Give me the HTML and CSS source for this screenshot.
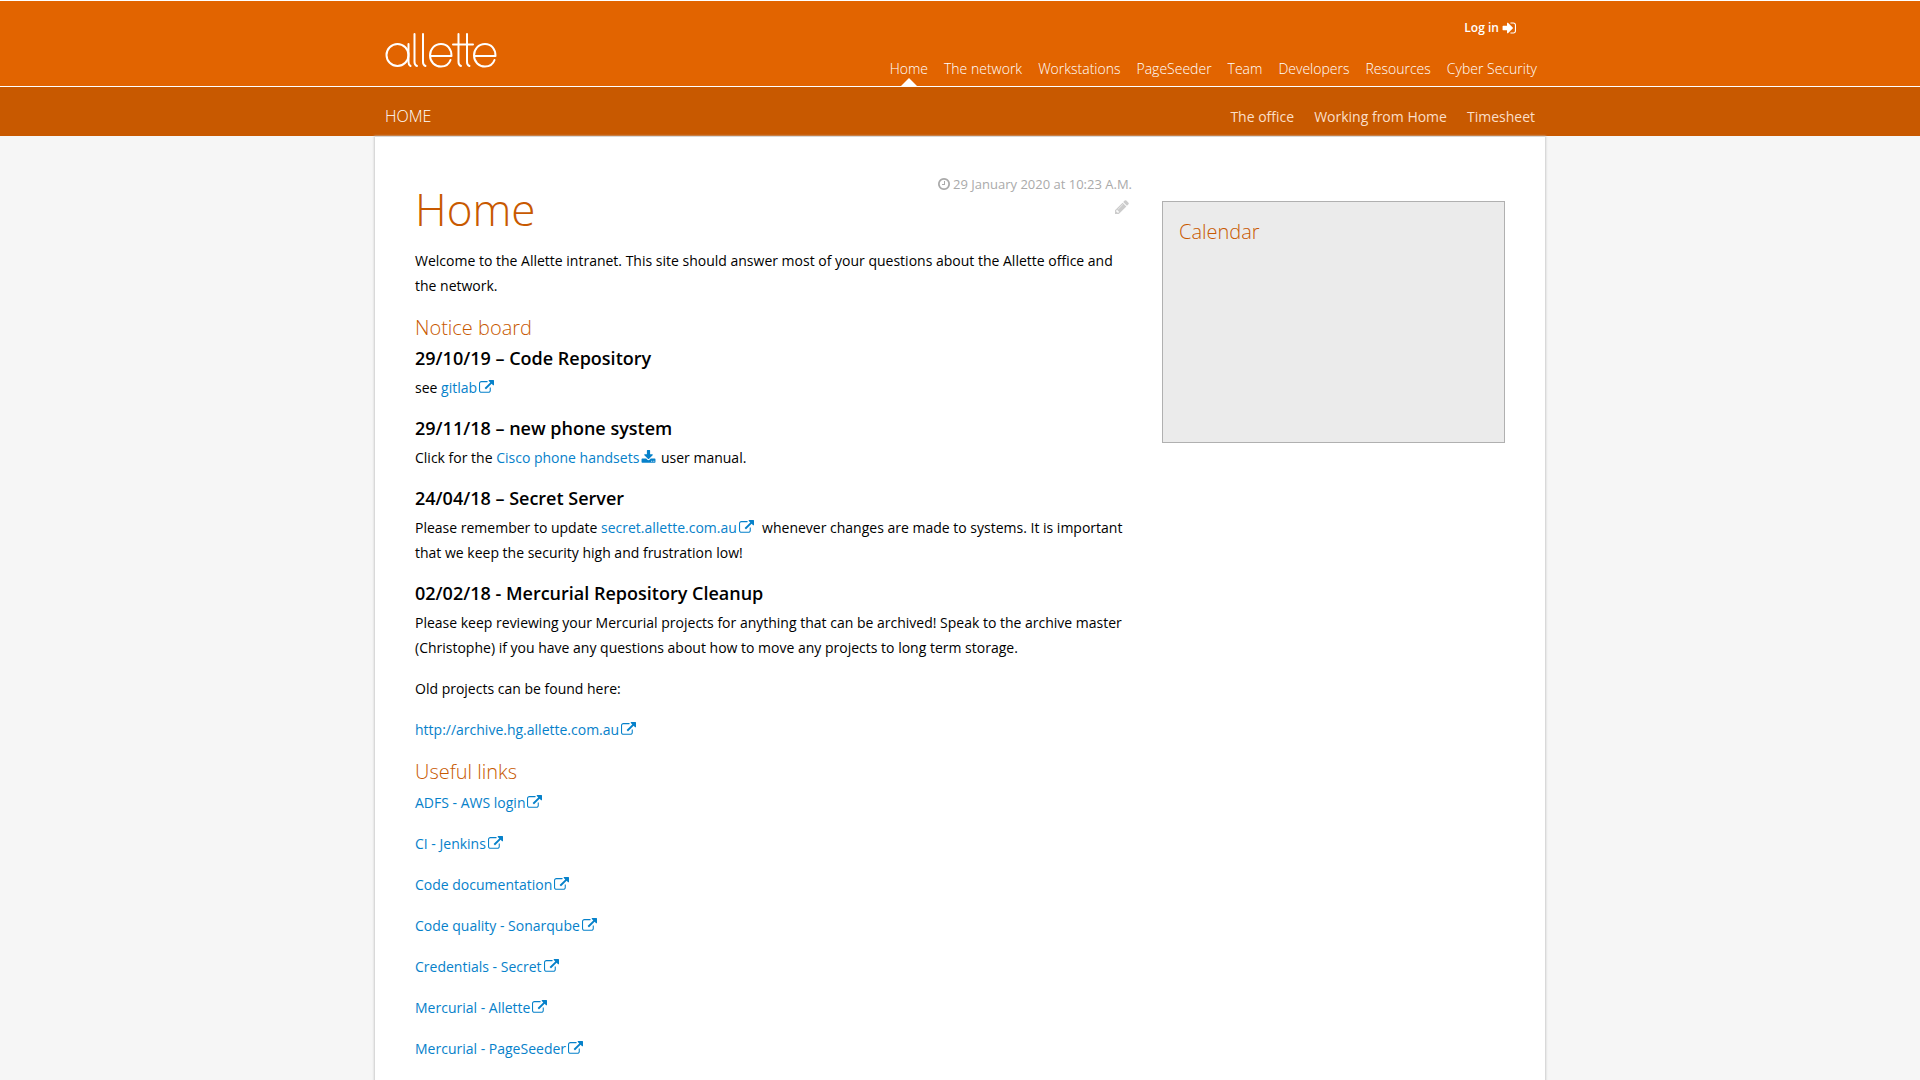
FILE: index.html
```html
<!DOCTYPE html>
<html lang="en">
<head>
<meta charset="utf-8">
<title>Home</title>
<link rel="stylesheet" href="styles.css">
</head>
<body>
<svg class="sprite" aria-hidden="true">
  <symbol id="i-ext" viewBox="0 0 1792 1792"><path d="M1408 928v320q0 119-84.5 203.5t-203.5 84.5h-832q-119 0-203.5-84.5t-84.5-203.5v-832q0-119 84.5-203.5t203.5-84.5h704q14 0 23 9t9 23v64q0 14-9 23t-23 9h-704q-66 0-113 47t-47 113v832q0 66 47 113t113 47h832q66 0 113-47t47-113v-320q0-14 9-23t23-9h64q14 0 23 9t9 23zm384-864v512q0 26-19 45t-45 19-45-19l-176-176-652 652q-10 10-23 10t-23-10l-114-114q-10-10-10-23t10-23l652-652-176-176q-19-19-19-45t19-45 45-19h512q26 0 45 19t19 45z"/></symbol>
  <symbol id="i-down" viewBox="0 0 1792 1792"><path d="M1344 1344q0-26-19-45t-45-19-45 19-19 45 19 45 45 19 45-19 19-45zm256 0q0-26-19-45t-45-19-45 19-19 45 19 45 45 19 45-19 19-45zm128-224v320q0 40-28 68t-68 28h-1472q-40 0-68-28t-28-68v-320q0-40 28-68t68-28h465l135 136q58 56 136 56t136-56l136-136h464q40 0 68 28t28 68zm-325-569q17 41-14 70l-448 448q-18 19-45 19t-45-19l-448-448q-31-29-14-70 17-39 59-39h256v-448q0-26 19-45t45-19h256q26 0 45 19t19 45v448h256q42 0 59 39z"/></symbol>
  <symbol id="i-clock" viewBox="128 0 1536 1792"><path d="M1024 544v448q0 14-9 23t-23 9h-320q-14 0-23-9t-9-23v-64q0-14 9-23t23-9h224v-352q0-14 9-23t23-9h64q14 0 23 9t9 23zm416 352q0-148-73-273t-198-198-273-73-273 73-198 198-73 273 73 273 198 198 273 73 273-73 198-198 73-273zm224 0q0 209-103 385.500t-279.500 279.500-385.500 103-385.500-103-279.500-279.500-103-385.500 103-385.500 279.500-279.500 385.500-103 385.500 103 279.500 279.500 103 385.500z"/></symbol>
  <symbol id="i-pencil" viewBox="128 128 1536 1536"><path d="M491 1536l91-91-235-235-91 91v107h128v128h107zm523-928q0-22-22-22-10 0-17 7l-542 542q-7 7-7 17 0 22 22 22 10 0 17-7l542-542q7-7 7-17zm-54-192l416 416-832 832h-416v-416zm683 96q0 53-37 90l-166 166-416-416 166-165q36-38 90-38 53 0 91 38l235 234q37 39 37 91z"/></symbol>
  <symbol id="i-signin" viewBox="64 96 1600 1600"><path d="M1312 896q0 26-19 45l-544 544q-19 19-45 19t-45-19-19-45v-288h-448q-26 0-45-19t-19-45v-384q0-26 19-45t45-19h448v-288q0-26 19-45t45-19 45 19l544 544q19 19 19 45zm352-352v704q0 119-84.500 203.500t-203.500 84.500h-320q-13 0-22.500-9.500t-9.500-22.500q0-4-1-20t-.5-26.500 3-23.500 10-19.500 20.500-6.500h320q66 0 113-47t47-113v-704q0-66-47-113t-113-47h-312l-11.500-1-11.500-3-8-5.500-7-9-2-13.500q0-4-1-20t-.5-26.500 3-23.500 10-19.500 20.500-6.500h320q119 0 203.500 84.500t84.500 203.500z"/></symbol>
</svg>

<header class="header">
  <div class="wrap header-row">
    <a class="logo" href="#" aria-label="allette">
      <svg viewBox="0 0 112 36" width="112" height="36">
        <g fill="none" stroke="#fff" stroke-width="2" stroke-linecap="round" stroke-linejoin="round">
          <circle cx="12.500" cy="23" r="11"/>
          <path d="M23.500 12v18q0 3 2 4M29.500 2v28q0 3 2.500 4M38 2v28q0 3 2.500 4"/>
          <path d="M45.500 24h21c0-7-4-12-10.500-12s-11 5-11 11.500 5 11 11 11c4.500 0 8-2 9.500-6.500"/>
          <path d="M73.500 2v28q0 3 2.500 4M82 2v28q0 3 2.500 4M68 12.500h20"/>
          <path d="M89.500 24h21c0-7-4-12-10.500-12s-11 5-11 11.500 5 11 11 11c4.500 0 8-2 9.500-6.500"/>
        </g>
      </svg>
    </a>
    <div class="header-right">
      <a class="login" href="#">Log in <svg class="icon icon-lead"><use href="#i-signin"/></svg></a>
      <nav class="main-nav">
        <a class="active" href="#">Home</a>
        <a href="#">The network</a>
        <a href="#">Workstations</a>
        <a href="#">PageSeeder</a>
        <a href="#">Team</a>
        <a href="#">Developers</a>
        <a href="#">Resources</a>
        <a href="#">Cyber Security</a>
      </nav>
    </div>
  </div>
</header>

<div class="subbar">
  <div class="wrap subbar-row">
    <a class="section" href="#">HOME</a>
    <nav class="sub-nav">
      <a href="#">The office</a>
      <a href="#">Working from Home</a>
      <a href="#">Timesheet</a>
    </nav>
  </div>
</div>

<div class="page">
  <main class="content">
    <div class="title-row">
      <h1>Home</h1>
      <div class="meta">
        <time datetime="2020-01-29T10:23"><svg class="icon icon-clock"><use href="#i-clock"/></svg> 29 January 2020 at 10:23 A.M.</time>
        <a class="edit" href="#" aria-label="Edit"><svg class="icon icon-lead"><use href="#i-pencil"/></svg></a>
      </div>
    </div>
    <p>Welcome to the Allette intranet. This site should answer most of your questions about the Allette office and the network.</p>
    <h2>Notice board</h2>
    <h3>29/10/19 – Code Repository</h3>
    <p>see <a href="#">gitlab<svg class="icon"><use href="#i-ext"/></svg></a></p>
    <h3>29/11/18 – new phone system</h3>
    <p>Click for the <a href="#">Cisco phone handsets<svg class="icon"><use href="#i-down"/></svg></a> user manual.</p>
    <h3>24/04/18 – Secret Server</h3>
    <p>Please remember to update <a href="#">secret.allette.com.au<svg class="icon"><use href="#i-ext"/></svg></a>&nbsp; whenever changes are made to systems. It is important that we keep the security high and frustration low!</p>
    <h3>02/02/18 - Mercurial Repository Cleanup</h3>
    <p>Please keep reviewing your Mercurial projects for anything that can be archived! Speak to the archive master (Christophe) if you have any questions about how to move any projects to long term storage.</p>
    <p>Old projects can be found here:</p>
    <p><a href="#">http://archive.hg.allette.com.au<svg class="icon"><use href="#i-ext"/></svg></a></p>
    <h2>Useful links</h2>
    <p><a href="#">ADFS - AWS login<svg class="icon"><use href="#i-ext"/></svg></a></p>
    <p><a href="#">CI - Jenkins<svg class="icon"><use href="#i-ext"/></svg></a></p>
    <p><a href="#">Code documentation<svg class="icon"><use href="#i-ext"/></svg></a></p>
    <p><a href="#">Code quality - Sonarqube<svg class="icon"><use href="#i-ext"/></svg></a></p>
    <p><a href="#">Credentials - Secret<svg class="icon"><use href="#i-ext"/></svg></a></p>
    <p><a href="#">Mercurial - Allette<svg class="icon"><use href="#i-ext"/></svg></a></p>
    <p><a href="#">Mercurial - PageSeeder<svg class="icon"><use href="#i-ext"/></svg></a></p>
  </main>
  <aside class="sidebar">
    <section class="calendar"><h2>Calendar</h2></section>
  </aside>
</div>
</body>
</html>
```

FILE: styles.css
```css
* { box-sizing: border-box; }
body {
  margin: 0;
  background: #f6f6f6;
  color: #000;
  font: 400 14px/25px "Open Sans", sans-serif;
}
a { color: #0681ca; text-decoration: none; }
.sprite { display: none; }
.icon { width: 15px; height: 15px; fill: currentColor; vertical-align: -2px; margin: 0 1px 0 2px; }
.icon-lead { width: 14px; height: 14px; margin: 0; vertical-align: -3px; }
.icon-clock { width: 12px; height: 14px; margin: 0; }
.wrap { max-width: 1170px; margin: 0 auto; padding: 0 10px; }

.header { background: #e26400; border-top: 1px solid #fff; border-bottom: 1px solid #fff; }
.header-row { display: flex; justify-content: space-between; }
.header a { color: #fff; }
.logo { padding-top: 31px; }
.logo svg { display: block; }
.header-right { display: flex; flex-direction: column; align-items: flex-end; padding-top: 14px; }
.login { font-size: 12px; font-weight: 600; margin-right: 19px; }
.main-nav { display: flex; gap: 16px; margin: 16px -2px 0 0; font-weight: 300; }
.main-nav a { position: relative; padding-bottom: 5px; }
.main-nav .active::after {
  content: "";
  position: absolute;
  left: 50%;
  bottom: 0;
  margin-left: -8px;
  border: 8px solid transparent;
  border-top: 0;
  border-bottom-color: #fff;
}

.subbar { background: #c85900; border-bottom: 1px solid #f6f6f6; }
.subbar-row { display: flex; justify-content: space-between; align-items: baseline; padding-top: 17px; padding-bottom: 7px; }
.section { color: #fff; font-size: 16px; font-weight: 300; }
.sub-nav { display: flex; gap: 20px; }
.sub-nav a { color: #fbdfc8; }

.page {
  display: flex;
  gap: 30px;
  max-width: 1170px;
  margin: 0 auto;
  padding: 35px 40px 60px;
  background: #fff;
  box-shadow: 0 0 2px 1px #ccc;
}
.content { flex: 1; min-width: 0; }
p { margin: 0 0 16px; }
h1, h2, h3 { margin: 0; }
h1 { color: #c85900; font-size: 44px; font-weight: 300; line-height: 60px; }
h2 { color: #c85900; font-size: 20px; font-weight: 300; line-height: 28px; margin-bottom: 4px; }
h3 { font-size: 18px; font-weight: 600; line-height: 25px; margin-bottom: 4px; }
.title-row { display: flex; justify-content: space-between; padding-bottom: 9px; }
.title-row h1 { padding-top: 7px; }
.meta { color: #aaa; font-size: 13px; line-height: 24px; display: flex; flex-direction: column; align-items: flex-end; }
.edit { color: #ccc; line-height: 20px; padding-right: 3px; }
.sidebar { width: 343px; padding-top: 29px; }
.calendar { min-height: 242px; padding: 16px; border: 1px solid #b0b0b0; background: #ebebeb; }
```
